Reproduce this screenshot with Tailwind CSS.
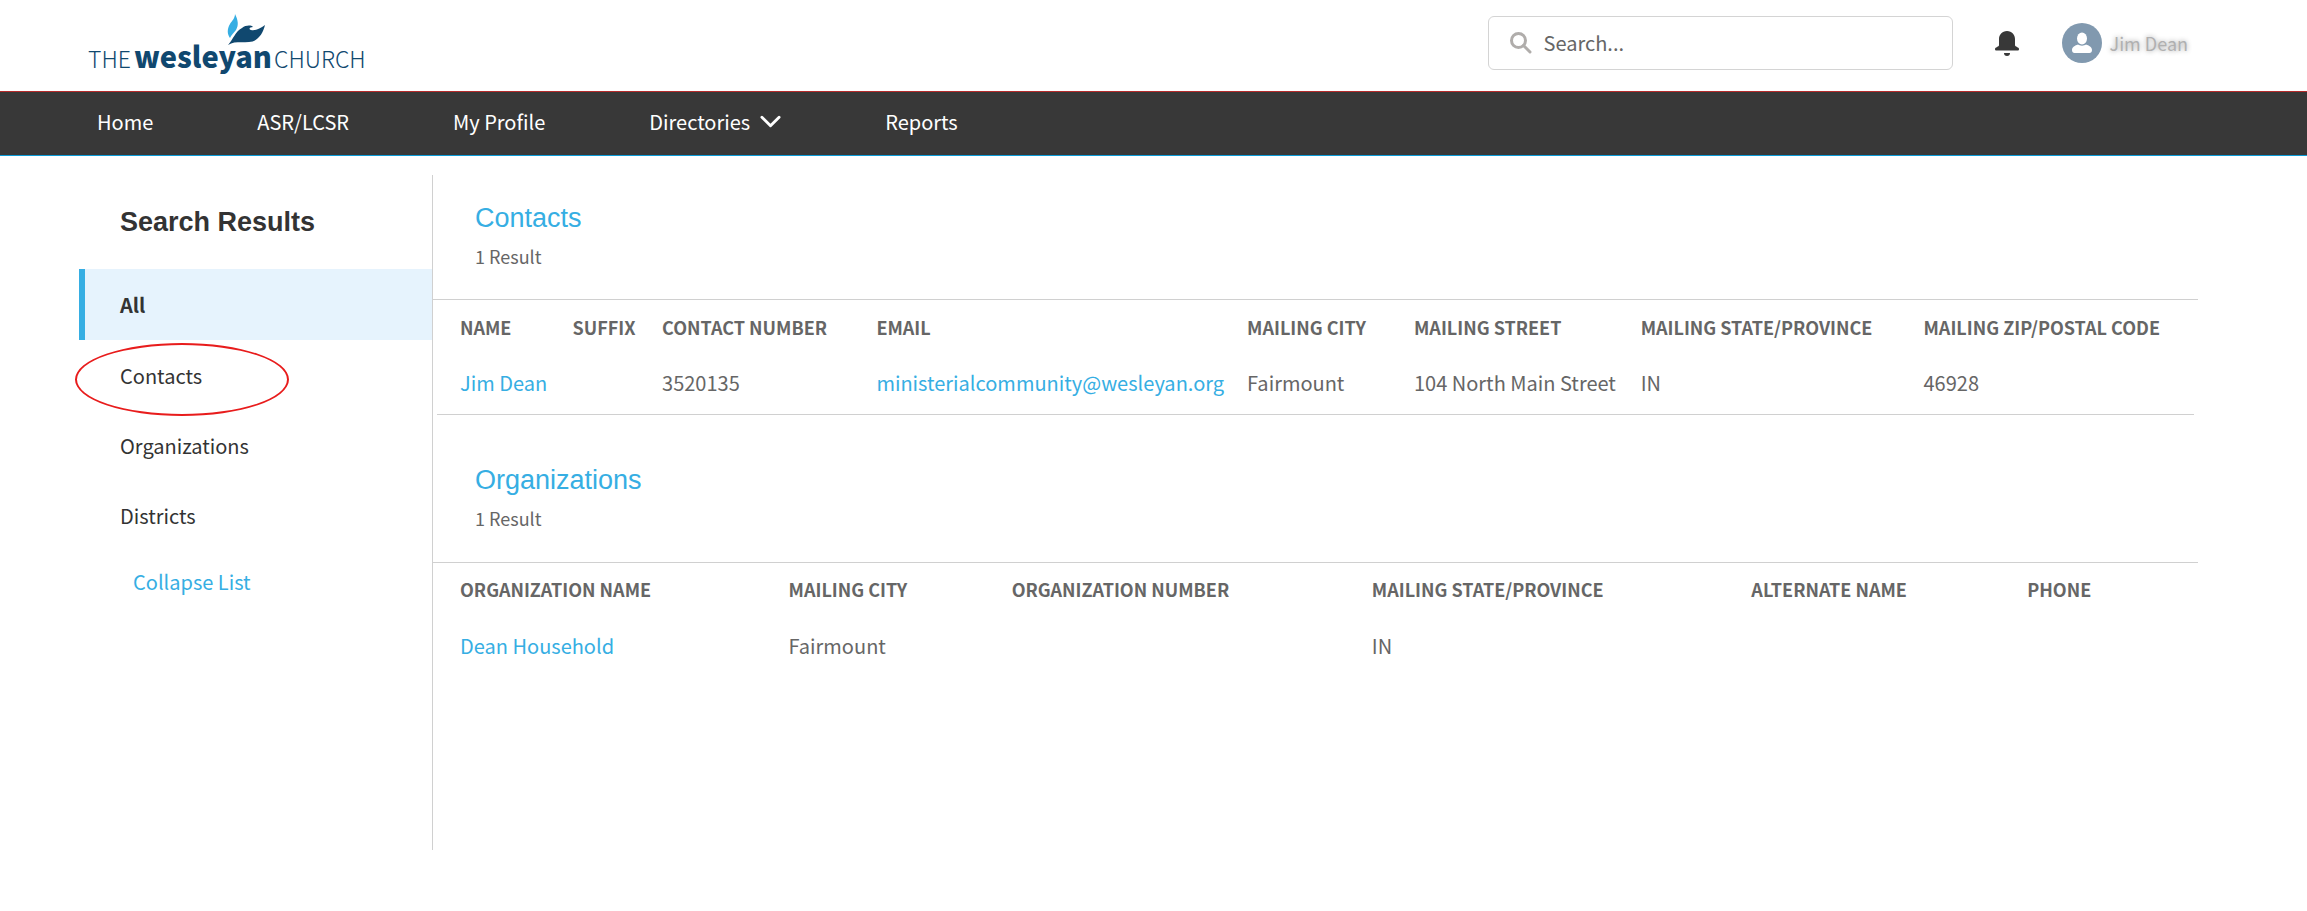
<!DOCTYPE html>
<html lang="en">
<head>
    <meta charset="UTF-8">
    <meta name="viewport" content="width=device-width, initial-scale=1.0">
    <title>Search Results - The Wesleyan Church</title>
    <script src="https://cdn.jsdelivr.net/npm/@tailwindcss/browser@4"></script>
</head>
<body class="bg-white font-['Noto_Sans_CJK_SC',sans-serif] text-xl text-[#666666] min-h-screen">

    <!-- Top bar -->
    <header class="flex items-center justify-between h-[91px] pb-[5px] pl-[88px] pr-[119px]">
        <a href="#" aria-label="The Wesleyan Church">
            <svg class="w-[290px] h-[72px]" viewBox="0 0 290 72" font-family="'Noto Sans CJK SC', sans-serif" fill="#10486f">
                <path fill="#36aee3" d="M147 7 C150 13 151 18 148 23 C146 26 143 28 142 31 C139 27 139 22 142 17 C144 14 147 11 147 7 Z"/>
                <path d="M140 38 C146 31 147 25 154 21 C158 18 163 18 165 20 C162 20 160 22 163 23 C168 24 173 21 177 18 C175 27 169 35 161 35 C153 36 146 34 140 38 Z"/>
                <text x="0" y="61" font-size="23" font-weight="300">THE</text>
                <text x="46" y="61" font-size="29" font-weight="900">wesleyan</text>
                <text x="186" y="61" font-size="23" font-weight="300">CHURCH</text>
            </svg>
        </a>

        <div class="flex items-center">
            <form class="flex items-center w-[465px] h-[54px] pl-5 border border-[#d4d4d4] rounded-md">
                <label for="search" class="mr-[11px]">
                    <svg class="size-6" viewBox="0 0 24 24" fill="none" stroke="#b0adab" stroke-width="3" role="img" aria-label="Search">
                        <circle cx="9.5" cy="9.5" r="7"/>
                        <path d="M14.5 14.5 L21 21" stroke-linecap="round"/>
                    </svg>
                </label>
                <input id="search" type="text" placeholder="Search..." class="w-full bg-transparent outline-none placeholder:text-[#666666]">
            </form>

            <button type="button" aria-label="Notifications" class="ml-[40px]">
                <svg class="w-7 h-7" viewBox="0 0 28 28" fill="#383838">
                    <path d="M14 2 C9 2 6 6 6 10 V16 C6 18 2 18 2 20 C2 21 2.500 21.500 3.500 21.500 H24.500 C25.500 21.500 26 21 26 20 C26 18 22 18 22 16 V10 C22 6 19 2 14 2 Z"/>
                    <path d="M11 24 H17 C17 26 16 27 14 27 C12 27 11 26 11 24 Z"/>
                </svg>
            </button>

            <button type="button" class="flex items-center gap-2 ml-[41px]">
                <svg class="size-10" viewBox="0 0 40 40">
                    <circle cx="20" cy="20" r="20" fill="#8199af"/>
                    <ellipse cx="20" cy="15.500" rx="5" ry="6" fill="#fff"/>
                    <path d="M10 27 C10 24 13 22.500 16 21.500 C18 23 22 23 24 21.500 C27 22.500 30 24 30 27 C30 29 29 30 27.500 30 H12.500 C11 30 10 29 10 27 Z" fill="#fff"/>
                </svg>
                <span class="text-lg text-[#b0b0b0] [text-shadow:0_0_5px_#999]">Jim Dean</span>
            </button>
        </div>
    </header>

    <!-- Main navigation -->
    <nav class="h-[65px] px-[97px] bg-[#383838] border-t border-t-[#b52b2b] border-b border-b-[#0a9bd8] text-white">
        <ul class="flex items-center gap-[104px] h-[60px]">
            <li><a href="#">Home</a></li>
            <li><a href="#">ASR/LCSR</a></li>
            <li><a href="#">My Profile</a></li>
            <li>
                <button type="button" class="flex items-center gap-2.5">
                    Directories
                    <svg class="w-[21px] h-[14px]" viewBox="0 0 22 14" fill="none" stroke="#fff" stroke-width="3" stroke-linecap="round" stroke-linejoin="round">
                        <path d="M2 2 L11 11 L20 2"/>
                    </svg>
                </button>
            </li>
            <li><a href="#">Reports</a></li>
        </ul>
    </nav>

    <div class="flex mt-[19px] pl-[79px] pr-[109px]">
        <!-- Sidebar -->
        <aside class="w-[353px] shrink-0 text-[#333333]">
            <h2 class="my-[32px] pl-[41px] font-['Liberation_Sans',sans-serif] text-[27px] leading-[30px] font-bold">Search Results</h2>
            <ul>
                <li class="bg-[#e6f3fd]"><a href="#" class="flex items-center h-[71px] pl-[35px] border-l-6 border-[#36aee3] font-bold">All</a></li>
                <li class="relative">
                    <a href="#" class="flex items-center h-[71px] pl-[41px]">Contacts</a>
                    <!-- hand-drawn highlight around the link -->
                    <span class="absolute -left-1 top-[3px] w-[214px] h-[73px] border-2 border-[#e81c1c] rounded-[50%] pointer-events-none"></span>
                </li>
                <li><a href="#" class="flex items-center h-[70px] pl-[41px]">Organizations</a></li>
                <li><a href="#" class="flex items-center h-[70px] pl-[41px]">Districts</a></li>
            </ul>
            <button type="button" class="flex items-center h-[62px] pl-[54px] text-[#36aee3]">Collapse List</button>
        </aside>

        <!-- Results -->
        <main class="grow min-h-[675px] border-l border-[#d0d0d0]">
            <section>
                <div class="h-[124px] pt-[28px] pl-[42px]">
                    <h3 class="font-['Liberation_Sans',sans-serif] text-[27px] leading-[30px] text-[#36aee3]"><a href="#">Contacts</a></h3>
                    <p class="mt-[8px] text-lg leading-[30px]">1 Result</p>
                </div>
                <div class="border-t border-[#d0d0d0] px-1">
                    <table class="w-full table-fixed text-left whitespace-nowrap border-b border-[#d0d0d0]">
                        <thead class="text-lg">
                            <tr class="h-[53px]">
                                <th class="w-[6.4%] pl-[23px] font-bold">NAME</th>
                                <th class="w-[5.1%] pl-[23px] font-bold">SUFFIX</th>
                                <th class="w-[12.2%] pl-[23px] font-bold">CONTACT NUMBER</th>
                                <th class="w-[21.1%] pl-[23px] font-bold">EMAIL</th>
                                <th class="w-[9.5%] pl-[23px] font-bold">MAILING CITY</th>
                                <th class="w-[12.9%] pl-[23px] font-bold">MAILING STREET</th>
                                <th class="w-[16.1%] pl-[23px] font-bold">MAILING STATE/PROVINCE</th>
                                <th class="pl-[23px] font-bold">MAILING ZIP/POSTAL CODE</th>
                            </tr>
                        </thead>
                        <tbody>
                            <tr class="h-[61px]">
                                <td class="pl-[23px]"><a href="#" class="text-[#36aee3]">Jim Dean</a></td>
                                <td class="pl-[23px]"></td>
                                <td class="pl-[23px]">3520135</td>
                                <td class="pl-[23px]"><a href="#" class="text-[#36aee3]">ministerialcommunity@wesleyan.org</a></td>
                                <td class="pl-[23px]">Fairmount</td>
                                <td class="pl-[23px]">104 North Main Street</td>
                                <td class="pl-[23px]">IN</td>
                                <td class="pl-[23px]">46928</td>
                            </tr>
                        </tbody>
                    </table>
                </div>
            </section>

            <section class="mt-[22px]">
                <div class="h-[125px] pt-[28px] pl-[42px]">
                    <h3 class="font-['Liberation_Sans',sans-serif] text-[27px] leading-[30px] text-[#36aee3]"><a href="#">Organizations</a></h3>
                    <p class="mt-[8px] text-lg leading-[30px]">1 Result</p>
                </div>
                <div class="border-t border-[#d0d0d0] px-1">
                    <table class="w-full table-fixed text-left whitespace-nowrap">
                        <thead class="text-lg">
                            <tr class="h-[53px]">
                                <th class="w-[18.7%] pl-[23px] font-bold">ORGANIZATION NAME</th>
                                <th class="w-[12.7%] pl-[23px] font-bold">MAILING CITY</th>
                                <th class="w-[20.5%] pl-[23px] font-bold">ORGANIZATION NUMBER</th>
                                <th class="w-[21.6%] pl-[23px] font-bold">MAILING STATE/PROVINCE</th>
                                <th class="w-[15.7%] pl-[23px] font-bold">ALTERNATE NAME</th>
                                <th class="pl-[23px] font-bold">PHONE</th>
                            </tr>
                        </thead>
                        <tbody>
                            <tr class="h-[61px]">
                                <td class="pl-[23px]"><a href="#" class="text-[#36aee3]">Dean Household</a></td>
                                <td class="pl-[23px]">Fairmount</td>
                                <td class="pl-[23px]"></td>
                                <td class="pl-[23px]">IN</td>
                                <td class="pl-[23px]"></td>
                                <td class="pl-[23px]"></td>
                            </tr>
                        </tbody>
                    </table>
                </div>
            </section>
        </main>
    </div>

</body>
</html>
